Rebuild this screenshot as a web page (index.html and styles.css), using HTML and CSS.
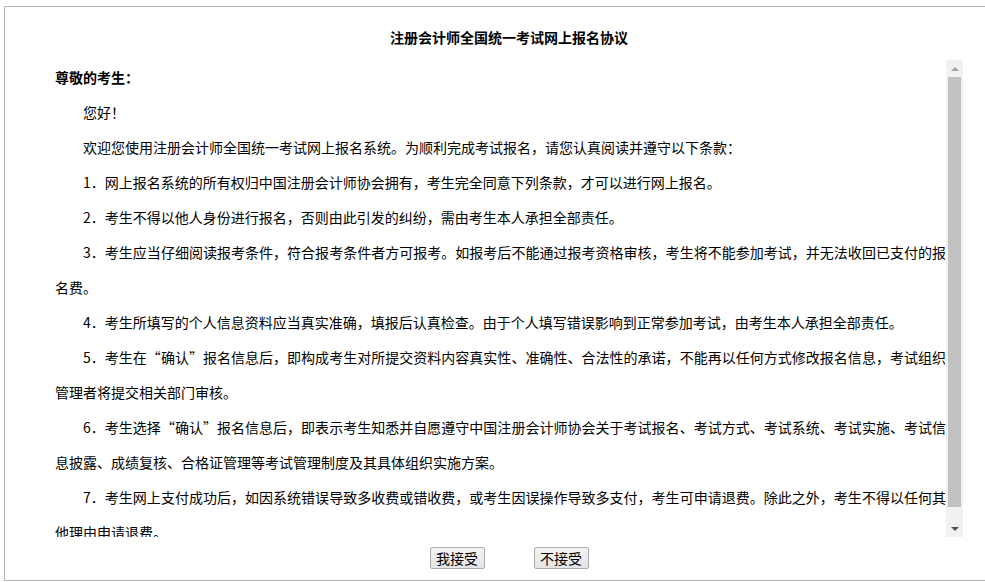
FILE: index.html
```html
<!DOCTYPE html>
<html lang="zh-CN">
<head>
<meta charset="utf-8">
<title>注册会计师全国统一考试网上报名协议</title>
<link rel="stylesheet" href="styles.css">
</head>
<body>
<div class="frame">
  <h1 class="title">注册会计师全国统一考试网上报名协议</h1>
  <div class="agreement">
    <div class="agreement-body">
      <p class="greet">尊敬的考生：</p>
      <p class="para">您好！</p>
      <p class="para">欢迎您使用注册会计师全国统一考试网上报名系统。为顺利完成考试报名，请您认真阅读并遵守以下条款：</p>
      <p class="para">1．网上报名系统的所有权归中国注册会计师协会拥有，考生完全同意下列条款，才可以进行网上报名。</p>
      <p class="para">2．考生不得以他人身份进行报名，否则由此引发的纠纷，需由考生本人承担全部责任。</p>
      <p class="para">3．考生应当仔细阅读报考条件，符合报考条件者方可报考。如报考后不能通过报考资格审核，考生将不能参加考试，并无法收回已支付的报名费。</p>
      <p class="para">4．考生所填写的个人信息资料应当真实准确，填报后认真检查。由于个人填写错误影响到正常参加考试，由考生本人承担全部责任。</p>
      <p class="para">5．考生在“确认”报名信息后，即构成考生对所提交资料内容真实性、准确性、合法性的承诺，不能再以任何方式修改报名信息，考试组织管理者将提交相关部门审核。</p>
      <p class="para">6．考生选择“确认”报名信息后，即表示考生知悉并自愿遵守中国注册会计师协会关于考试报名、考试方式、考试系统、考试实施、考试信息披露、成绩复核、合格证管理等考试管理制度及其具体组织实施方案。</p>
      <p class="para">7．考生网上支付成功后，如因系统错误导致多收费或错收费，或考生因误操作导致多支付，考生可申请退费。除此之外，考生不得以任何其他理由申请退费。</p>
    </div>
    <div class="scrollbar">
      <div class="sb-btn"><span class="arrow-up"></span></div>
      <div class="sb-track"><div class="sb-thumb"></div></div>
      <div class="sb-btn"><span class="arrow-down"></span></div>
    </div>
  </div>
  <div class="actions">
    <button class="btn" type="button">我接受</button>
    <button class="btn" type="button">不接受</button>
  </div>
</div>
</body>
</html>
```
FILE: styles.css
```css
html, body {
  margin: 0;
  padding: 0;
  background: #fff;
  overflow: hidden;
}
body {
  font-family: "Noto Sans CJK SC", "Microsoft YaHei", sans-serif;
  font-size: 14px;
  color: #000;
}
.frame {
  box-sizing: border-box;
  margin: 6px 0 0 4px;
  width: 981px;
  height: 575px;
  border-top: 1px solid #b4b4b4;
  border-left: 1px solid #b4b4b4;
  border-bottom: 1px solid #b4b4b4;
  padding: 20px 22px 0 50px;
  display: flex;
  flex-direction: column;
}
.title {
  margin: 0;
  font-size: 14px;
  font-weight: bold;
  line-height: 20px;
  text-align: center;
}
.agreement {
  margin-top: 13px;
  height: 477px;
  display: flex;
}
.agreement-body {
  flex: 1;
  overflow: hidden;
  text-align: justify;
}
.agreement-body p {
  margin: 0;
  line-height: 35px;
}
.greet {
  font-weight: bold;
}
.para {
  text-indent: 2em;
}
.scrollbar {
  width: 17px;
  background: #f1f1f1;
  display: flex;
  flex-direction: column;
}
.sb-btn {
  height: 17px;
  display: flex;
  align-items: center;
  justify-content: center;
}
.arrow-up {
  width: 0;
  height: 0;
  border-left: 4px solid transparent;
  border-right: 4px solid transparent;
  border-bottom: 4px solid #a3a3a3;
}
.arrow-down {
  width: 0;
  height: 0;
  border-left: 4px solid transparent;
  border-right: 4px solid transparent;
  border-top: 4px solid #505050;
}
.sb-track {
  flex: 1;
  padding: 0 2px;
}
.sb-thumb {
  height: 430px;
  background: #c1c1c1;
}
.actions {
  margin-top: 10px;
  display: flex;
  justify-content: center;
  gap: 49px;
}
.btn {
  box-sizing: border-box;
  width: 55px;
  height: 22px;
  padding: 0;
  font-family: inherit;
  font-size: 14px;
  line-height: 20px;
  color: #000;
  border: 1px solid #acacac;
  border-radius: 2px;
  background: linear-gradient(#f2f2f2, #e5e5e5);
}
```
